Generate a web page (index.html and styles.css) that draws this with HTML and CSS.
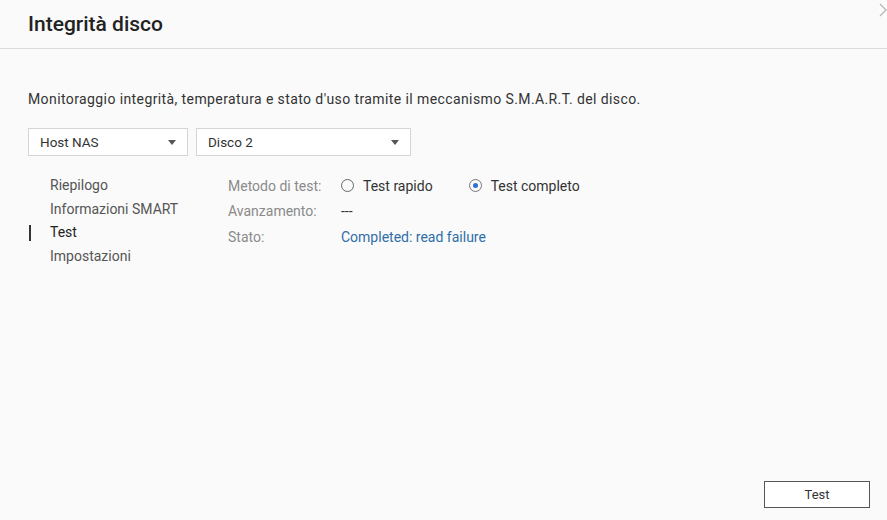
FILE: index.html
```html
<!DOCTYPE html>
<html lang="it">
  <head>
    <meta charset="UTF-8" />
    <title>Integrità disco</title>
    <link rel="stylesheet" href="styles.css">
  </head>
  <body>
    <div class="dialog">
      <!-- HEADER -->
      <header class="dialog-header">
        <h1>Integrità disco</h1>
        <span class="close-btn">
          <svg width="8" height="14" viewBox="0 0 8 14"><path d="M1 1 L7 7 L1 13" fill="none" stroke="#b5b5b5" stroke-width="1.2"/></svg>
        </span>
      </header>

      <!-- BODY -->
      <div class="dialog-body">
        <p class="desc">Monitoraggio integrità, temperatura e stato d'uso tramite il meccanismo S.M.A.R.T. del disco.</p>

        <div class="selects">
          <div class="select host">
            <span>Host NAS</span>
            <span class="caret"></span>
          </div>
          <div class="select disk">
            <span>Disco 2</span>
            <span class="caret"></span>
          </div>
        </div>

        <div class="panel">
          <ul class="side-nav">
            <li>Riepilogo</li>
            <li>Informazioni SMART</li>
            <li class="active">Test</li>
            <li>Impostazioni</li>
          </ul>

          <div class="test-form">
            <div class="row">
              <span class="label">Metodo di test:</span>
              <label class="radio"><span class="dot"></span>Test rapido</label>
              <label class="radio checked"><span class="dot"></span>Test completo</label>
            </div>
            <div class="row">
              <span class="label">Avanzamento:</span>
              <span class="value">---</span>
            </div>
            <div class="row">
              <span class="label">Stato:</span>
              <span class="value status">Completed: read failure</span>
            </div>
          </div>
        </div>
      </div>

      <!-- FOOTER -->
      <footer class="dialog-footer">
        <button class="btn">Test</button>
      </footer>
    </div>
  </body>
</html>
```

FILE: styles.css
```css
/* Global */
* {
  box-sizing: border-box;
}
body {
  margin: 0;
  font-family: Roboto, "Liberation Sans", sans-serif;
  font-size: 14px;
  color: #333;
  background: #fafafa;
}

.dialog {
  width: 887px;
  height: 520px;
  display: flex;
  flex-direction: column;
  background: #fafafa;
}

/* HEADER */
.dialog-header {
  position: relative;
  height: 49px;
  border-bottom: 1px solid #dcdcdc;
  padding: 0 28px;
  display: flex;
  align-items: center;
}
.dialog-header h1 {
  margin: 0;
  font-size: 21px;
  font-weight: 500;
  color: #222;
  padding-bottom: 1px;
}
.close-btn {
  position: absolute;
  right: 0;
  top: 3px;
}

/* BODY */
.dialog-body {
  flex: 1;
  padding: 0 28px;
}
.desc {
  margin: 42px 0 0;
  line-height: 17px;
  letter-spacing: 0.4px;
  color: #333;
}

.selects {
  display: flex;
  gap: 8px;
  margin-top: 20px;
}
.select {
  height: 28px;
  border: 1px solid #d4d4d4;
  background: #fff;
  display: flex;
  align-items: center;
  justify-content: space-between;
  padding: 0 11px 0 11px;
  color: #333;
  font-size: 13.5px;
}
.host {
  width: 160px;
}
.disk {
  width: 215px;
}
.caret {
  width: 0;
  height: 0;
  border-left: 4px solid transparent;
  border-right: 4px solid transparent;
  border-top: 5px solid #555;
  margin-top: 1px;
}

.panel {
  display: flex;
  margin-top: 21px;
}
.side-nav {
  list-style: none;
  margin: 0;
  padding: 0;
  width: 200px;
}
.side-nav li {
  position: relative;
  height: 23.5px;
  line-height: 17px;
  padding-left: 22px;
  color: #555;
}
.side-nav li.active {
  color: #222;
}
.side-nav li.active::before {
  content: "";
  position: absolute;
  left: 1px;
  top: 1px;
  width: 2px;
  height: 16px;
  background: #333;
}

.test-form {
  display: flex;
  flex-direction: column;
  margin-top: -4px;
}
.row {
  display: flex;
  align-items: center;
  height: 25.5px;
}
.label {
  width: 113px;
  color: #8a8a8a;
}
.value {
  color: #333;
}
.status {
  color: #2e6ea8;
}
.radio {
  display: flex;
  align-items: center;
  color: #333;
  margin-right: 36px;
}
.dot {
  width: 13px;
  height: 13px;
  border: 1px solid #666;
  border-radius: 50%;
  margin-right: 9px;
  display: flex;
  align-items: center;
  justify-content: center;
}
.checked .dot {
  border-color: #777;
}
.checked .dot::after {
  content: "";
  width: 5px;
  height: 5px;
  border-radius: 50%;
  background: #2f6fd6;
}

/* FOOTER */
.dialog-footer {
  display: flex;
  justify-content: flex-end;
  padding: 0 17px 12px 0;
}
.btn {
  width: 106px;
  height: 27px;
  border: 1px solid #555;
  background: #fff;
  font-family: inherit;
  font-size: 13px;
  color: #333;
}
```
